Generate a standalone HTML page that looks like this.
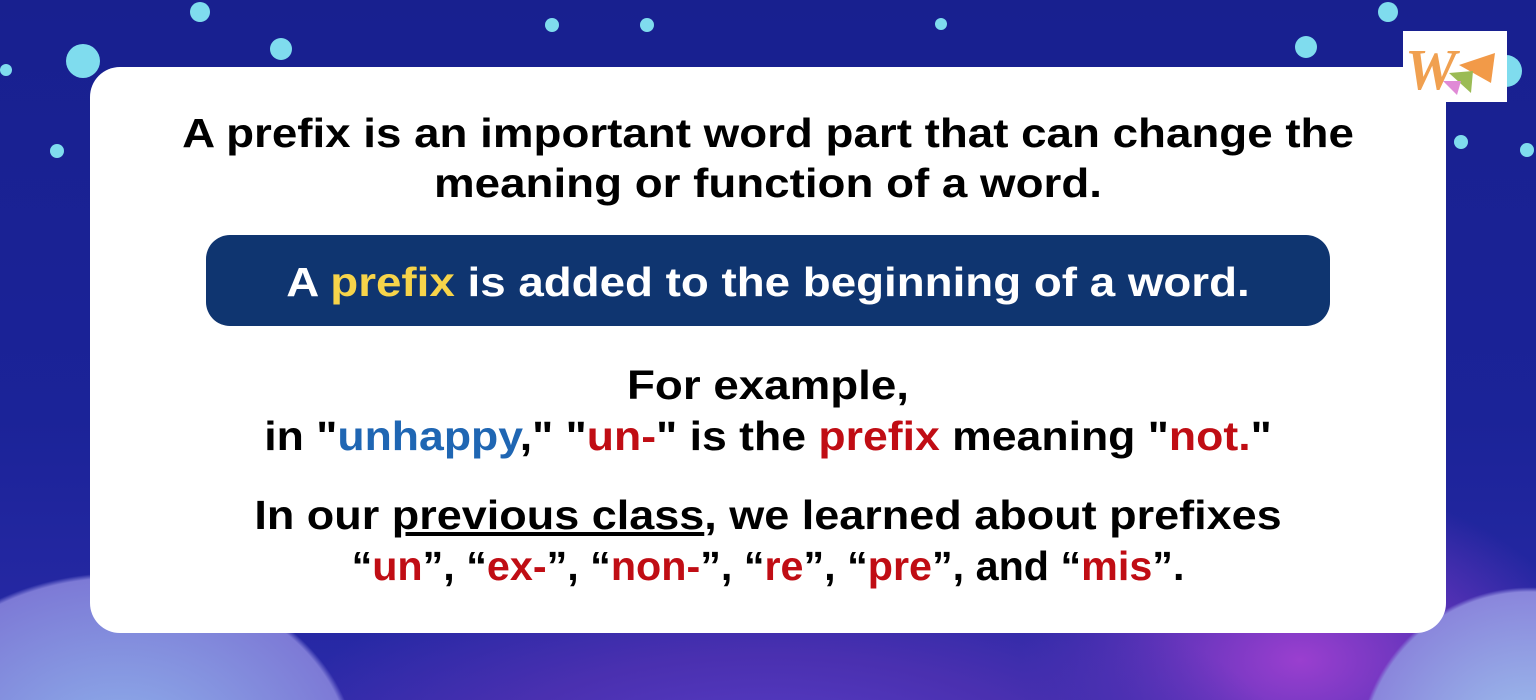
<!DOCTYPE html>
<html><head><style>
html,body{margin:0;padding:0}
body{width:1536px;height:700px;overflow:hidden;position:relative;background:#17208e;font-family:"Liberation Sans",sans-serif;font-weight:bold}
.bg{position:absolute;inset:0;background:
radial-gradient(ellipse 330px 260px at 120px 760px,#8fb4ec 0%,#7d7ad6 70%,transparent 72%),
radial-gradient(ellipse 240px 240px at 1530px 760px,#9fc8ef 0%,#8a86dc 70%,transparent 72%),
radial-gradient(ellipse 700px 260px at 768px 760px,#5a3fc8 0%,#4a30b0 40%,transparent 75%),
radial-gradient(ellipse 400px 250px at 1300px 660px,#9a3fcf 0%,transparent 70%),
linear-gradient(#18208f,#1b2398 60%,#2a2aa8)}
.dot{position:absolute;border-radius:50%;background:#7fdcee}
.card{position:absolute;left:90px;top:67px;width:1356px;height:566px;background:#fff;border-radius:30px}
.t{position:absolute;left:0;width:1536px;text-align:center;font-size:41px;color:#000;line-height:44px;white-space:nowrap;transform:scaleX(1.115)}
.box{position:absolute;left:206px;top:235px;width:1124px;height:91px;background:#0f3570;border-radius:24px}
.r{color:#c00d14}.b{color:#1f66b3}.y{color:#f7d44a}
.logo{position:absolute;left:1403px;top:31px;width:104px;height:71px;background:#fff}
</style></head><body>
<div class="bg"></div>
<div class="dot" style="left:66px;top:44px;width:34px;height:34px"></div>
<div class="dot" style="left:190px;top:2px;width:20px;height:20px"></div>
<div class="dot" style="left:270px;top:38px;width:22px;height:22px"></div>
<div class="dot" style="left:0;top:64px;width:12px;height:12px"></div>
<div class="dot" style="left:50px;top:144px;width:14px;height:14px"></div>
<div class="dot" style="left:545px;top:18px;width:14px;height:14px"></div>
<div class="dot" style="left:640px;top:18px;width:14px;height:14px"></div>
<div class="dot" style="left:935px;top:18px;width:12px;height:12px"></div>
<div class="dot" style="left:1295px;top:36px;width:22px;height:22px"></div>
<div class="dot" style="left:1378px;top:2px;width:20px;height:20px"></div>
<div class="dot" style="left:1490px;top:55px;width:32px;height:32px"></div>
<div class="dot" style="left:1520px;top:143px;width:14px;height:14px"></div>
<div class="dot" style="left:1454px;top:135px;width:14px;height:14px"></div>
<div class="card"></div>
<div class="t" style="top:111px">A prefix is an important word part that can change the</div>
<div class="t" style="top:161px">meaning or function of a word.</div>
<div class="box"></div>
<div class="t" style="top:260px;color:#fff">A <span class="y">prefix</span> is added to the beginning of a word.</div>
<div class="t" style="top:363px">For example,</div>
<div class="t" style="top:414px;transform:scaleX(1.087)">in "<span class="b">unhappy</span>," "<span class="r">un-</span>" is the <span class="r">prefix</span> meaning "<span class="r">not.</span>"</div>
<div class="t" style="top:493px;transform:scaleX(1.097)">In our <u>previous class</u>, we learned about prefixes</div>
<div class="t" style="top:544px;transform:scaleX(1.007)">“<span class="r">un</span>”, “<span class="r">ex-</span>”, “<span class="r">non-</span>”, “<span class="r">re</span>”, “<span class="r">pre</span>”, and “<span class="r">mis</span>”.</div>
<div class="logo"><svg width="104" height="71" viewBox="0 0 104 71">
<text x="2" y="58" font-family="Liberation Serif,serif" font-style="italic" font-size="58" fill="#f0a050">W</text>
<polygon points="56,34 92,22 88,52" fill="#f29a48"/>
<polygon points="46,42 70,40 68,62" fill="#9bbb55"/>
<polygon points="40,50 58,50 54,64" fill="#e08ad6"/>
</svg></div>
</body></html>
